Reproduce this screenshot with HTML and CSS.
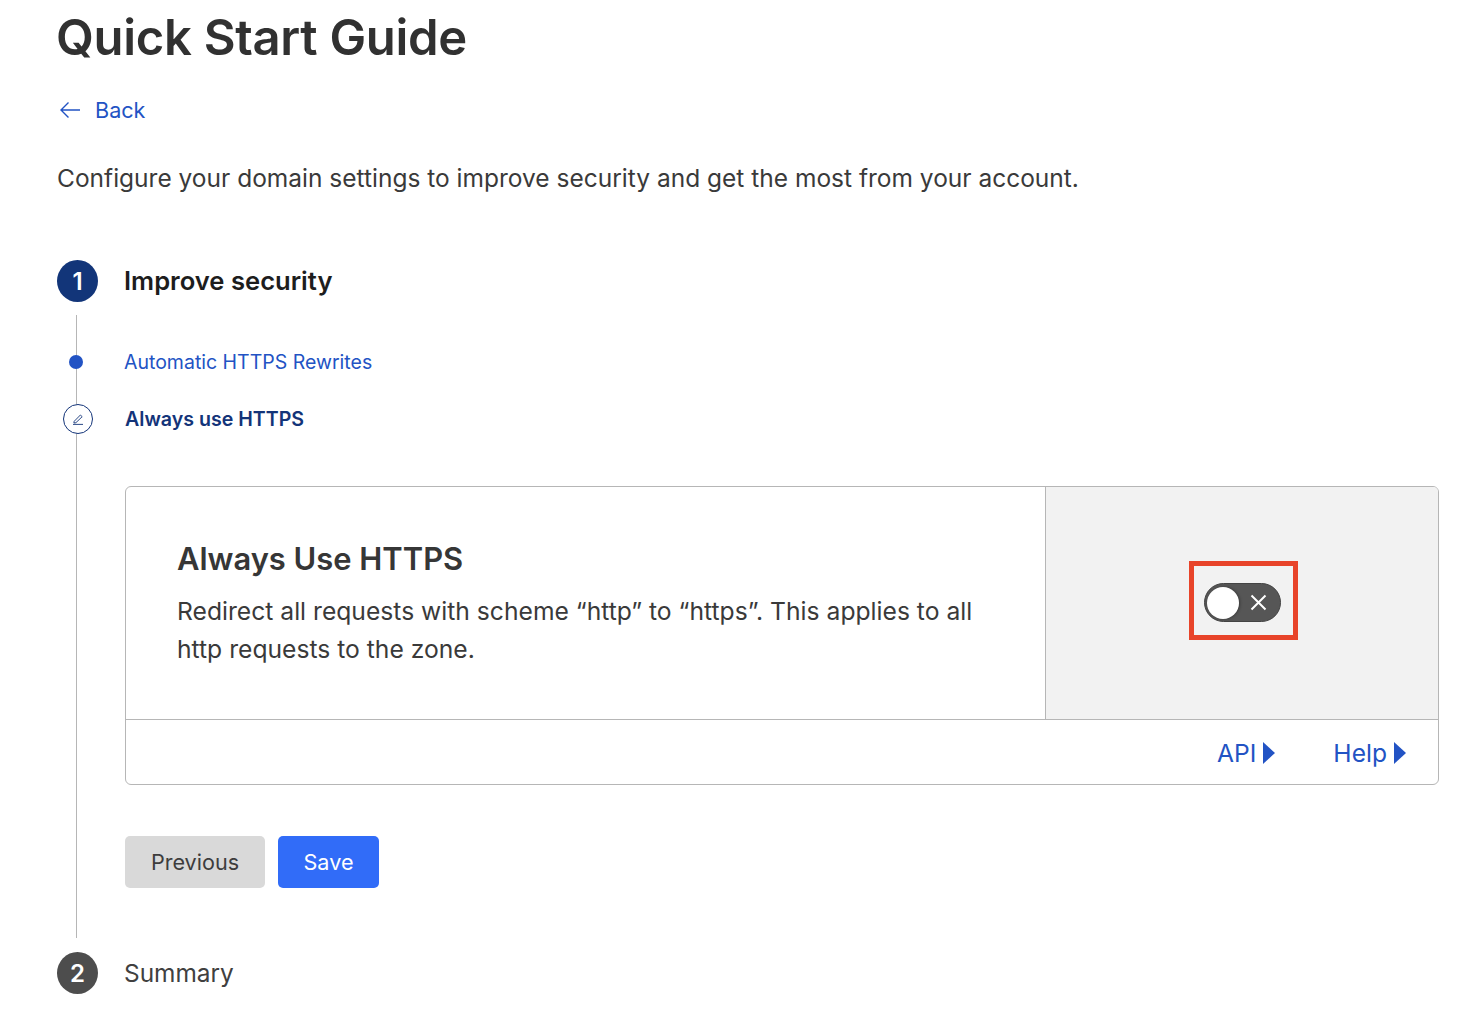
FILE: index.html
```html
<!DOCTYPE html>
<html lang="en">
<head>
<meta charset="utf-8">
<title>Quick Start Guide</title>
<link rel="stylesheet" href="styles.css">
</head>
<body>
<main class="page">
  <h1 class="title">Quick Start Guide</h1>
  <a class="back" href="#">
    <svg class="back-icon" width="22" height="18" viewBox="0 0 22 18" fill="none" stroke="currentColor" stroke-width="1.4"><path d="M21 9H2M9.5 1.5 2 9l7.500 7.500"/></svg>
    <span>Back</span>
  </a>
  <p class="intro">Configure your domain settings to improve security and get the most from your account.</p>

  <div class="step-head">
    <span class="num num-active">1</span>
    <h2 class="step-title">Improve security</h2>
  </div>

  <div class="step-body">
    <a class="sub sub-done" href="#"><span class="dot"></span>Automatic HTTPS Rewrites</a>
    <div class="sub sub-current">
      <span class="pencil">
        <svg width="14" height="14" viewBox="0 0 14 14" fill="none" stroke="currentColor" stroke-width="0.9"><path d="M3.200 9.300 9.400 3l1.800 1.700-6.300 6-2 .3zM2 12.400h10"/></svg>
      </span>
      Always use HTTPS
    </div>

    <section class="card">
      <div class="card-main">
        <div class="card-text">
          <h3 class="card-title">Always Use HTTPS</h3>
          <p class="card-desc">Redirect all requests with scheme “http” to “https”. This applies to all http requests to the zone.</p>
        </div>
        <div class="card-side">
          <div class="highlight">
            <div class="toggle">
              <span class="knob"></span>
              <svg class="toggle-x" width="17" height="17" viewBox="0 0 17 17" stroke="#fff" stroke-width="2"><path d="M1.500 1.500l14 14M15.500 1.500l-14 14"/></svg>
            </div>
          </div>
        </div>
      </div>
      <div class="card-foot">
        <a class="foot-link" href="#">API<span class="tri"></span></a>
        <a class="foot-link" href="#">Help<span class="tri"></span></a>
      </div>
    </section>

    <div class="actions">
      <button class="btn btn-prev" type="button">Previous</button>
      <button class="btn btn-save" type="button">Save</button>
    </div>
  </div>

  <div class="step-head step-last">
    <span class="num num-idle">2</span>
    <span class="step-name">Summary</span>
  </div>
</main>
</body>
</html>
```
FILE: styles.css
```css
* { box-sizing: border-box; }
html, body { margin: 0; background: #fff; }
body { font-family: Inter, "Liberation Sans", sans-serif; color: #363636; }
.page { padding: 0 45px 0 57px; height: 1026px; overflow: hidden; }
.title { margin: 0 0 0 -1px; padding-top: 9px; font-size: 49px; line-height: 58px; font-weight: 600; color: #313131; letter-spacing: -0.3px; }
.back { display: flex; align-items: center; gap: 14px; margin-top: 29px; height: 28px; color: #2253c4; text-decoration: none; font-size: 21.600px; }
.back-icon { flex: none; margin-left: 2px; }
.intro { margin: 36px 0 0; font-size: 24.500px; line-height: 36px; color: #3a3a3a; }
.step-head { display: flex; align-items: center; gap: 26px; margin-top: 64px; height: 42px; }
.num { flex: none; width: 41px; height: 42px; border-radius: 50%; display: flex; align-items: center; justify-content: center; color: #fff; font-size: 24px; font-weight: 600; }
.num-active { background: #123579; }
.num-idle { background: #4d4d4d; }
.step-title { margin: 0 0 2px; font-size: 25.600px; font-weight: 600; color: #1d1d1d; }
.step-body { margin: 13px 0 0 19px; height: 623px; border-left: 1px solid #b6b6b6; padding: 1px 0 0 47px; display: flow-root; }
.sub { position: relative; display: flex; align-items: center; height: 28px; font-size: 19.500px; text-decoration: none; }
.sub-done { margin-top: 32px; color: #2253c4; }
.sub-current { margin-top: 29px; padding-left: 1px; color: #133479; font-weight: 600; font-size: 19.600px; }
.dot { position: absolute; left: -55px; top: 7px; width: 14px; height: 14px; border-radius: 50%; background: #2253c4; }
.pencil { position: absolute; left: -61px; top: -1px; width: 30px; height: 30px; border-radius: 50%; border: 1px solid #133479; background: #fff; color: #133479; display: flex; align-items: center; justify-content: center; }
.card { margin: 53px 0 0 1px; border: 1px solid #b6b6b6; border-radius: 6px; height: 299px; overflow: hidden; background: #fff; }
.card-main { display: flex; height: 233px; border-bottom: 1px solid #b6b6b6; }
.card-text { flex: 0 0 920px; padding: 50px 60px 0 51px; border-right: 1px solid #b6b6b6; }
.card-title { margin: 0; font-size: 30.900px; line-height: 44px; font-weight: 600; color: #363636; }
.card-desc { margin: 11px 0 0; font-size: 24.660px; line-height: 38px; color: #3a3a3a; }
.card-side { flex: 1; background: #f2f2f2; padding: 74px 0 0 143px; }
.highlight { width: 109px; height: 79px; border: 5px solid #e8442a; padding: 17px 0 0 10px; }
.toggle { position: relative; width: 77px; height: 39px; border-radius: 20px; background: #565656; border: 1px solid #444; }
.knob { position: absolute; left: 2px; top: 3px; width: 32px; height: 32px; border-radius: 50%; background: #fff; box-shadow: 1px 0 3px rgba(0, 0, 0, .35); }
.toggle-x { position: absolute; left: 45px; top: 10px; }
.card-foot { display: flex; justify-content: flex-end; align-items: center; gap: 58px; height: 65px; padding-right: 32px; }
.foot-link { display: flex; align-items: center; gap: 7px; color: #2253c4; text-decoration: none; font-size: 24.600px; }
.tri { width: 0; height: 0; border-style: solid; border-width: 11px 0 11px 12px; border-color: transparent transparent transparent #2253c4; }
.actions { display: flex; gap: 13px; margin: 51px 0 0 1px; }
.btn { height: 52px; border: 0; border-radius: 5px; font-family: inherit; font-size: 21.600px; padding: 0; }
.btn-prev { width: 140px; background: #d9d9d9; color: #3d3d3d; }
.btn-save { width: 101px; background: #316cf8; color: #fff; }
.step-last { margin-top: 14px; }
.step-name { font-size: 24.400px; color: #404040; }
```
